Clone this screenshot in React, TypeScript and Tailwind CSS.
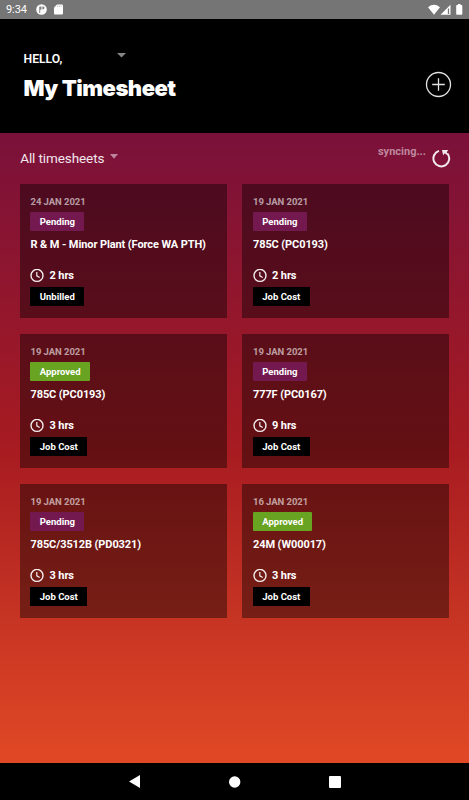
type Timesheet = {
  id: number;
  date: string;
  status: "Pending" | "Approved";
  title: string;
  hours: number;
  billing: string;
};

const timesheets: Timesheet[] = [
  { id: 1, date: "24 JAN 2021", status: "Pending", title: "R & M - Minor Plant (Force WA PTH)", hours: 2, billing: "Unbilled" },
  { id: 2, date: "19 JAN 2021", status: "Pending", title: "785C (PC0193)", hours: 2, billing: "Job Cost" },
  { id: 3, date: "19 JAN 2021", status: "Approved", title: "785C (PC0193)", hours: 3, billing: "Job Cost" },
  { id: 4, date: "19 JAN 2021", status: "Pending", title: "777F (PC0167)", hours: 9, billing: "Job Cost" },
  { id: 5, date: "19 JAN 2021", status: "Pending", title: "785C/3512B (PD0321)", hours: 3, billing: "Job Cost" },
  { id: 6, date: "16 JAN 2021", status: "Approved", title: "24M (W00017)", hours: 3, billing: "Job Cost" },
];

const statusColor = {
  Pending: "bg-[#74194f]",
  Approved: "bg-[#68a322]",
};

function StatusBar() {
  return (
    <div className="flex h-[19px] shrink-0 items-center justify-between bg-[#757575] pl-1.5 pr-[5px]">
      <div className="flex items-center">
        <span className="w-[30px] text-[11px] leading-[19px] tracking-[-0.1px] text-white">9:34</span>
        <svg width="11" height="11" viewBox="0 0 11 11">
          <circle cx="5.5" cy="5.5" r="5.3" fill="#fff" />
          <path d="M3.2 2.5h2.3v3.2H4.2v3.3h-1zM6.3 2.5h1.2q1 0 1 1.3t-1 1.4H6.3z" fill="#858585" />
        </svg>
        <svg className="ml-[7px]" width="9" height="11" viewBox="0 0 9 11">
          <path d="M3 .5h5Q9 .5 9 1.5v8Q9 10.5 8 10.5H1Q0 10.5 0 9.5V3.5z" fill="#fff" />
          <path d="M3.5 1.5v1.5M5.3 1.5v1.5M7.1 1.5v1.5" stroke="#aaa" strokeWidth=".6" />
        </svg>
      </div>
      <svg width="36" height="12" viewBox="0 0 36 12" fill="#fff">
        <path d="M0 3.2Q6-1.6 12 3.2L6 10.7z" />
        <path d="M22.5 .8V10.8H12.5z" />
        <path d="M20.5 4.5v5.5" stroke="#757575" strokeWidth="1.3" />
        <path d="M28.9 1H30V0h2.5v1h1.1q.7 0 .7.7v8.3q0 .7-.7.7h-4.7q-.7 0-.7-.7V1.7Q28.2 1 28.9 1z" />
      </svg>
    </div>
  );
}

function Header() {
  return (
    <header className="flex h-[114px] shrink-0 items-start justify-between bg-black pl-[23.5px] pr-[17px] text-white">
      <div className="pt-8">
        <div className="flex h-4 items-start">
          <p className="w-[93px] text-[12.2px] font-semibold leading-4">HELLO,</p>
          <svg className="mt-[2px]" width="9" height="5" viewBox="0 0 9 5">
            <path d="M0 0h9L4.5 4.6z" fill="#858585" />
          </svg>
        </div>
        <h1 className="mt-[5px] whitespace-nowrap font-['Inter','Liberation_Sans',sans-serif] text-[22px] font-black leading-[32px] tracking-[-0.5px]">
          My Timesheet
        </h1>
      </div>
      <button className="mt-[52px]" aria-label="Add timesheet">
        <svg width="27" height="27" viewBox="0 0 27 27" fill="none" stroke="#e2e2e2">
          <circle cx="13.5" cy="13.5" r="12" strokeWidth="1.3" />
          <path d="M13.5 7.2v12.6M7.2 13.5h12.6" strokeWidth="1.3" />
        </svg>
      </button>
    </header>
  );
}

function Toolbar() {
  return (
    <div className="flex h-[50px] items-start justify-between pl-[0.5px]">
      <div className="flex items-center pt-[15px]">
        <span className="w-[84px] whitespace-nowrap text-[13.5px] leading-[20px] tracking-[-0.1px] text-[#f2e7ec]">All timesheets</span>
        <svg className="mb-[3px] ml-[6px]" width="8" height="5" viewBox="0 0 8 5">
          <path d="M0 0h8L4 4.8z" fill="#bd849b" />
        </svg>
      </div>
      <div className="-mr-0.5 flex items-start">
        <span className="pt-[11px] text-[11px] font-bold leading-4 text-[#bd879b]">syncing...</span>
        <svg className="ml-[5px] mt-[15px]" width="20" height="20" viewBox="0 0 20 20">
          <path d="M8 2.9A7.9 7.9 0 1 0 16.3 5.3" fill="none" stroke="#f3e9ed" strokeWidth="2" />
          <path d="M11 1.9h6.3l-1.6 2.3 1 1.5-1.2 1-1.7-1.5-1.7 2.1z" fill="#f3e9ed" />
        </svg>
      </div>
    </div>
  );
}

function Clock() {
  return (
    <svg width="14" height="14" viewBox="0 0 14 14" fill="none" stroke="#f5eeef">
      <circle cx="7" cy="6.4" r="6" strokeWidth="1.4" />
      <path d="M6.8 3.1V6.8l2.9 1.7" strokeWidth="1.2" />
    </svg>
  );
}

function TimesheetCard({ item }: { item: Timesheet }) {
  return (
    <article className="flex h-[134px] flex-col items-start bg-black/40 pl-[10.8px] pt-[10px] text-white">
      <p className="text-[9.5px] font-bold leading-4 tracking-[-0.05px] text-white/60">{item.date}</p>
      <span className={`mt-[2px] h-[19px] rounded-[1px] px-[9.3px] text-[9.5px] font-bold leading-[19px] ${statusColor[item.status]}`}>
        {item.status}
      </span>
      <h2 className="mt-[6px] whitespace-nowrap text-[11px] font-bold leading-4 tracking-[-0.1px]">{item.title}</h2>
      <div className="mt-[15px] flex h-4 items-center gap-[5px]">
        <Clock />
        <span className="text-[11px] font-bold leading-4 tracking-[-0.1px]">{item.hours} hrs</span>
      </div>
      <span className="mt-[3px] h-[19px] bg-black px-[9.3px] text-[9.5px] font-bold leading-[19px]">{item.billing}</span>
    </article>
  );
}

function NavBar() {
  return (
    <nav className="flex h-[37px] shrink-0 items-center justify-center gap-[88px] bg-black">
      <svg width="12" height="13" viewBox="0 0 12 13">
        <path d="M11 0v13L0 6.5z" fill="#fff" />
      </svg>
      <svg width="12" height="12" viewBox="0 0 12 12">
        <circle cx="5.7" cy="6" r="5.7" fill="#fff" />
      </svg>
      <svg width="12" height="12" viewBox="0 0 12 12">
        <rect width="12" height="12" rx="1" fill="#fff" />
      </svg>
    </nav>
  );
}

export default function App() {
  return (
    <div className="flex h-[800px] w-[469px] flex-col overflow-hidden bg-black font-['Roboto','Liberation_Sans',sans-serif]">
      <StatusBar />
      <Header />
      <main className="flex-1 bg-linear-to-b/srgb from-[#7a113a] via-[#a71b21] to-[#e14925] pl-[19.7px] pr-5">
        <Toolbar />
        <div className="mt-px grid grid-cols-[207px_207px] gap-x-[15.5px] gap-y-4">
          {timesheets.map((item) => (
            <TimesheetCard key={item.id} item={item} />
          ))}
        </div>
      </main>
      <NavBar />
    </div>
  );
}
